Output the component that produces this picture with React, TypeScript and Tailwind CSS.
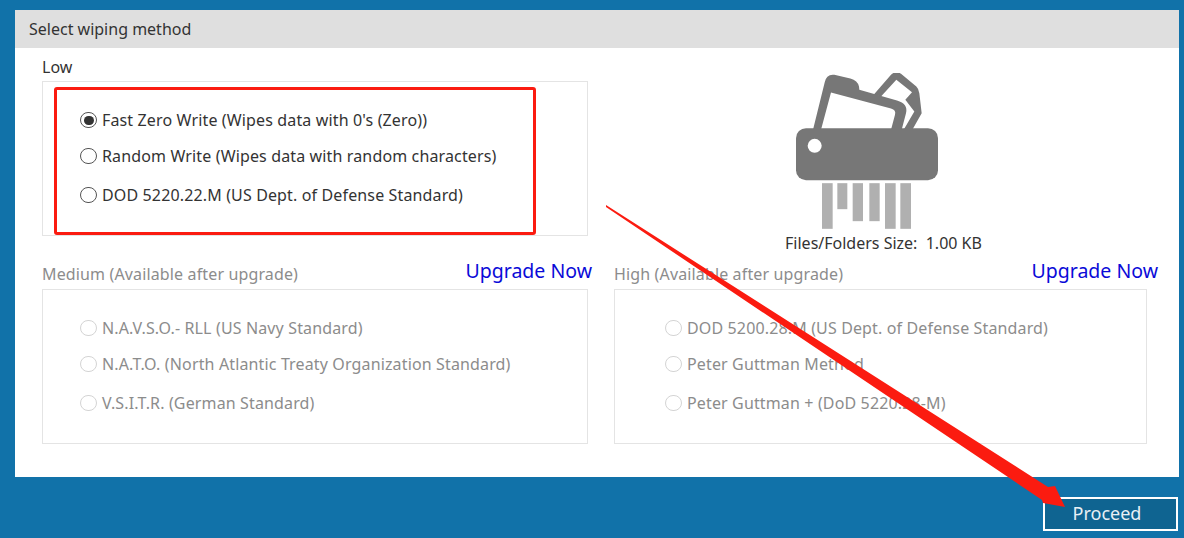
const lowMethods = [
  "Fast Zero Write (Wipes data with 0's (Zero))",
  'Random Write (Wipes data with random characters)',
  'DOD 5220.22.M (US Dept. of Defense Standard)',
];
const mediumMethods = [
  'N.A.V.S.O.- RLL (US Navy Standard)',
  'N.A.T.O. (North Atlantic Treaty Organization Standard)',
  'V.S.I.T.R. (German Standard)',
];
const highMethods = [
  'DOD 5200.28.M (US Dept. of Defense Standard)',
  'Peter Guttman Method',
  'Peter Guttman + (DoD 5220.28-M)',
];

function MethodList({ items, disabled, selected, inset }: { items: string[]; disabled?: boolean; selected?: number; inset: string }) {
  return (
    <div className={`flex flex-col pt-[28px] ${inset}`}>
      {items.map((label, i) => (
        <div key={label} className={`flex h-[20px] items-center gap-[5px] ${i === 1 ? 'mt-[16px]' : i === 2 ? 'mt-[19px]' : ''}`}>
          <span
            className={`flex h-[16px] w-[17px] items-center justify-center rounded-full border-[1.5px] ${
              disabled ? 'border-[#d4d4d4]' : 'border-[#555555]'
            }`}
          >
            {selected === i && <span className="h-[9px] w-[10px] rounded-full bg-[#333333]" />}
          </span>
          <span className={`text-[16px] tracking-[0.14px] whitespace-nowrap ${disabled ? 'text-[#8c8c8c]' : 'text-[#333333]'}`}>{label}</span>
        </div>
      ))}
    </div>
  );
}

function ShredderIcon() {
  return (
    <svg viewBox="107 40 426 470" className="h-[157px] w-[142px] shrink-0" aria-hidden="true">
      <path
        fill="#777777"
        d="M340 105 L392 45 Q408 30 422 42 L468 80 Q476 88 477 100 L484 160 L456 210 L430 210 L462 155 L435 120 L455 97 L408 60 L362 110 Z"
      />
      <path
        fillRule="evenodd"
        fill="#777777"
        d="M158 210 L193 68 Q198 42 222 45 L270 56 Q292 62 296 80 L297 90 L410 122 Q444 132 437 160 L424 210 Z M182 210 L392 210 L404 165 Q408 150 392 146 L212 98 Z"
      />
      <rect x="107" y="205" width="426" height="156" rx="30" fill="#777777" />
      <circle cx="163" cy="258" r="21" fill="#ffffff" />
      <rect x="185" y="370" width="32" height="137" fill="#b0b0b0" />
      <rect x="231" y="370" width="30" height="78" fill="#b0b0b0" />
      <rect x="277" y="370" width="31" height="114" fill="#b0b0b0" />
      <rect x="327" y="370" width="31" height="114" fill="#b0b0b0" />
      <rect x="374" y="370" width="32" height="137" fill="#b0b0b0" />
      <rect x="420" y="370" width="32" height="137" fill="#b0b0b0" />
    </svg>
  );
}

export default function App() {
  return (
    <div className="relative h-[538px] w-[1184px] overflow-hidden bg-[#1172a9] pt-[10px] font-['Noto_Sans',sans-serif]">
      <div className="ml-[15px] h-[467px] w-[1164px] bg-white">
        <div className="flex h-[38px] items-center bg-[#dfdfdf] pb-[1px] pl-[14px] text-[16px] text-[#333333]">Select wiping method</div>

        <div className="flex h-[188px] pl-[27px]">
          <div className="w-[546px]">
            <div className="flex h-[33px] items-center pt-[5px] text-[16px] text-[#333333]">Low</div>
            <div className="relative h-[155px] border border-[#e4e4e4]">
              <div className="absolute left-[11px] top-[5px] h-[148px] w-[482px] rounded-[3px] border-[3px] border-[#fb1b10]" />
              <MethodList items={lowMethods} selected={0} inset="pl-[37px]" />
            </div>
          </div>
          <div className="flex w-[546px] flex-col items-center pl-[12px] pt-[25px]">
            <ShredderIcon />
            <div className="ml-[33px] mt-[3px] shrink-0 text-[16px] leading-[20px] whitespace-nowrap text-[#333333]">Files/Folders Size:&nbsp; 1.00 KB</div>
          </div>
        </div>

        <div className="mt-[23px] flex pl-[27px]">
          <div className="w-[546px]">
            <div className="flex h-[30px] items-center justify-between">
              <span className="text-[16px] tracking-[0.14px] text-[#8c8c8c]">Medium (Available after upgrade)</span>
              <span className="-mr-[4px] -mt-[6px] text-[19.5px] text-[#0a0ad8]">Upgrade Now</span>
            </div>
            <div className="h-[155px] border border-[#e4e4e4]">
              <MethodList items={mediumMethods} disabled inset="pl-[37px]" />
            </div>
          </div>
          <div className="ml-[26px] w-[533px]">
            <div className="flex h-[30px] items-center justify-between">
              <span className="text-[16px] tracking-[0.14px] text-[#8c8c8c]">High (Available after upgrade)</span>
              <span className="-mr-[11px] -mt-[6px] text-[19.5px] text-[#0a0ad8]">Upgrade Now</span>
            </div>
            <div className="h-[155px] border border-[#e4e4e4]">
              <MethodList items={highMethods} disabled inset="pl-[50px]" />
            </div>
          </div>
        </div>
      </div>

      <div className="mt-[20px] flex justify-end pr-[6px]">
        <button className="flex h-[34px] w-[135px] items-center justify-center border-[2px] border-white bg-[#0f6491] pb-[2px] pr-[7px] text-[18px] text-[#e8f0f5]">
          Proceed
        </button>
      </div>

      {/* annotation arrow over the dialog */}
      <svg className="pointer-events-none absolute left-0 top-0" width="1184" height="538" aria-hidden="true">
        <polygon points="606,205 1048,487 1055,486 1065,507 1043,503 1042,500 606,207" fill="#fb1b10" />
      </svg>
    </div>
  );
}
